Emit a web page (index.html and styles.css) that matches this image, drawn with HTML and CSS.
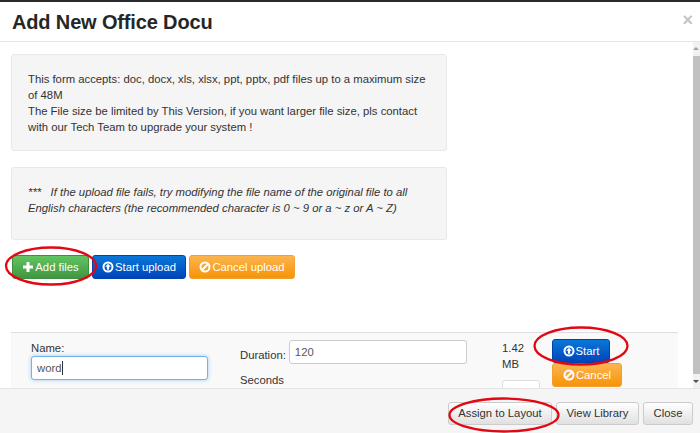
FILE: index.html
```html
<!DOCTYPE html>
<html lang="en">
<head>
<meta charset="utf-8">
<title>Add New Office Docu</title>
<link rel="stylesheet" href="styles.css">
</head>
<body>
<div class="modal">
  <header class="modal-header">
    <h4 class="modal-title">Add New Office Docu</h4>
    <span class="close-x">×</span>
  </header>
  <div class="modal-body">
    <div class="content">
      <div class="well well-first">
        This form accepts: doc, docx, xls, xlsx, ppt, pptx, pdf files up to a maximum size of 48M<br>
        The File size be limited by This Version, if you want larger file size, pls contact with our Tech Team to upgrade your system !
      </div>
      <div class="well well-second">
        <em>***&nbsp;&nbsp; If the upload file fails, try modifying the file name of the original file to all English characters (the recommended character is 0 ~ 9 or a ~ z or A ~ Z)</em>
      </div>
      <div class="toolbar">
        <button class="btn btn-green">
          <svg class="ico" viewBox="0 0 12 12"><path d="M4.500 1h3v3.500h3.500v3h-3.500v3.500h-3v-3.500h-3.500v-3h3.500z"/></svg>Add files
        </button>
        <button class="btn btn-blue">
          <svg class="ico" viewBox="0 0 12 12"><circle cx="6" cy="6" r="4.500" class="ring"/><path d="M6 2.800l2.800 3h-1.700v3h-2.200v-3h-1.700z"/></svg>Start upload
        </button>
        <button class="btn btn-orange">
          <svg class="ico" viewBox="0 0 12 12"><circle cx="6" cy="6" r="4.500" class="ring"/><path d="M3 9l6-6" class="slash"/></svg>Cancel upload
        </button>
      </div>
      <div class="file-row">
        <div class="col-name">
          <label class="name-label">Name:</label>
          <div class="name-input">word<span class="caret"></span></div>
        </div>
        <div class="col-duration">
          <div class="duration-line">
            <span class="duration-label">Duration:</span>
            <div class="duration-input">120</div>
          </div>
          <div class="seconds">Seconds</div>
        </div>
        <div class="col-size">
          <div class="size-text">1.42<br>MB</div>
          <div class="mini-box"></div>
        </div>
        <div class="col-actions">
          <button class="btn btn-blue btn-start">
            <svg class="ico" viewBox="0 0 12 12"><circle cx="6" cy="6" r="4.500" class="ring"/><path d="M6 2.800l2.800 3h-1.700v3h-2.200v-3h-1.700z"/></svg>Start
          </button>
          <button class="btn btn-orange btn-cancel">
            <svg class="ico" viewBox="0 0 12 12"><circle cx="6" cy="6" r="4.500" class="ring"/><path d="M3 9l6-6" class="slash"/></svg>Cancel
          </button>
        </div>
      </div>
    </div>
    <div class="scrollbar">
      <span class="arrow arrow-up"></span>
      <span class="thumb"></span>
      <span class="arrow arrow-down"></span>
    </div>
  </div>
  <footer class="modal-footer">
    <button class="btn btn-default">Assign to Layout</button>
    <button class="btn btn-default">View Library</button>
    <button class="btn btn-default">Close</button>
  </footer>
</div>
<svg class="marks" viewBox="0 0 700 433" width="700" height="433" fill="none" stroke="#e30613" stroke-width="2.300">
  <ellipse cx="51" cy="266" rx="45" ry="18.500"/>
  <ellipse cx="581" cy="346" rx="46.500" ry="18.500"/>
  <ellipse cx="504" cy="415" rx="54.500" ry="16.500"/>
</svg>
</body>
</html>
```
FILE: styles.css
```css
* { box-sizing: border-box; }
html, body { margin: 0; padding: 0; }
body {
  width: 700px;
  height: 433px;
  overflow: hidden;
  position: relative;
  background: #fff;
  font-family: "Liberation Sans", Arial, sans-serif;
  font-size: 11.300px;
  line-height: 16px;
  color: #333;
}
.modal {
  height: 433px;
  display: flex;
  flex-direction: column;
  border-top: 2px solid #2b2b2b;
}
.modal-header {
  height: 40px;
  flex: none;
  display: flex;
  align-items: center;
  justify-content: space-between;
  padding: 0 7px 0 12px;
  border-bottom: 1px solid #e5e5e5;
}
.modal-title {
  margin: 0;
  font-size: 20px;
  line-height: 24px;
  font-weight: 700;
  letter-spacing: -.15px;
  color: #262626;
}
.close-x {
  font-size: 18px;
  font-weight: 700;
  color: #c4c4c4;
  line-height: 16px;
  margin-bottom: 4px;
}
.modal-body {
  flex: 1;
  min-height: 0;
  display: flex;
  overflow: hidden;
}
.content {
  flex: 1;
  min-width: 0;
  padding: 12px 15px 0 11px;
}
.well {
  width: 436px;
  background: #f5f5f5;
  border: 1px solid #e8e8e8;
  border-radius: 3px;
  padding: 16px;
}
.well-first { height: 97px; }
.well-second { height: 73px; margin-top: 16px; }
.toolbar {
  display: flex;
  gap: 3px;
  margin-top: 15px;
  margin-left: 1px;
}
.btn {
  display: inline-flex;
  align-items: center;
  justify-content: center;
  height: 24px;
  padding: 0 8px;
  border: 1px solid transparent;
  border-radius: 3px;
  font: inherit;
  color: #fff;
  white-space: nowrap;
}
.ico { width: 12px; height: 12px; margin-right: 1px; fill: #fff; flex: none; }
.ring { fill: none; stroke: #fff; stroke-width: 2; }
.slash { fill: none; stroke: #fff; stroke-width: 2; }
.btn-green { width: 77px; background: linear-gradient(#62c462, #419641); border-color: #3e8f3e; }
.btn-blue { background: linear-gradient(#0a78d8, #0044bb); border-color: #0044aa; }
.btn-orange { background: linear-gradient(#fbb450, #f89406); border-color: #f0a030; }
.toolbar .btn-blue { width: 94px; }
.toolbar .btn-orange { width: 106px; }
.file-row {
  display: flex;
  height: 60px;
  margin-top: 53px;
  background: #f9f9f9;
  border-top: 1px solid #ddd;
  overflow: hidden;
}
.col-name { width: 177px; margin-left: 20px; padding-top: 7px; flex: none; }
.name-label { display: block; line-height: 16px; color: #333; }
.name-input {
  height: 24px;
  padding: 3px 5px;
  background: #fff;
  border: 1px solid #74b3e6;
  border-radius: 3px;
  box-shadow: 0 0 4px rgba(102, 175, 233, .6);
  color: #555;
  display: flex;
  align-items: center;
}
.caret { display: inline-block; width: 1px; height: 14px; background: #333; }
.col-duration { width: 227px; margin-left: 32px; padding-top: 7px; flex: none; }
.duration-line { display: flex; align-items: flex-start; gap: 3px; }
.duration-label { padding-top: 7px; }
.duration-input {
  flex: 1;
  height: 24px;
  padding: 3px 5px;
  background: #fff;
  border: 1px solid #ccc;
  border-radius: 3px;
  color: #555;
}
.seconds { margin-top: 8px; }
.col-size { width: 50px; margin-left: 35px; padding-top: 7px; flex: none; }
.size-text { line-height: 16px; }
.mini-box {
  width: 38px;
  height: 24px;
  margin-top: 8px;
  background: #fff;
  border: 1px solid #ddd;
  border-radius: 3px;
}
.col-actions {
  display: flex;
  flex-direction: column;
  align-items: flex-start;
  padding-top: 6px;
  flex: none;
}
.btn-start { width: 58px; }
.btn-cancel { width: 70px; }
.scrollbar {
  width: 7px;
  flex: none;
  display: flex;
  flex-direction: column;
  align-items: center;
  background: #f1f1f1;
}
.arrow { flex: none; width: 7px; height: 14px; position: relative; }
.arrow::after {
  content: "";
  position: absolute;
  left: 0;
  border-left: 3.500px solid transparent;
  border-right: 3.500px solid transparent;
}
.arrow-up::after { top: 5px; border-bottom: 3px solid #a3a3a3; }
.arrow-down::after { bottom: 5px; border-top: 3px solid #505050; }
.thumb { flex: 1; width: 7px; background: #c1c1c1; }
.modal-footer {
  height: 45px;
  flex: none;
  display: flex;
  justify-content: flex-end;
  align-items: center;
  gap: 4px;
  padding: 4px 7px 0 0;
  background: #f5f5f5;
  border-top: 1px solid #e5e5e5;
}
.btn-default {
  color: #333;
  background: linear-gradient(#fff, #e0e0e0);
  border-color: #ccc;
  height: 23px;
}
.modal-footer .btn-default:nth-child(1) { width: 104px; }
.modal-footer .btn-default:nth-child(2) { width: 83px; }
.modal-footer .btn-default:nth-child(3) { width: 50px; }
.marks { position: absolute; left: 0; top: 0; pointer-events: none; }
```
